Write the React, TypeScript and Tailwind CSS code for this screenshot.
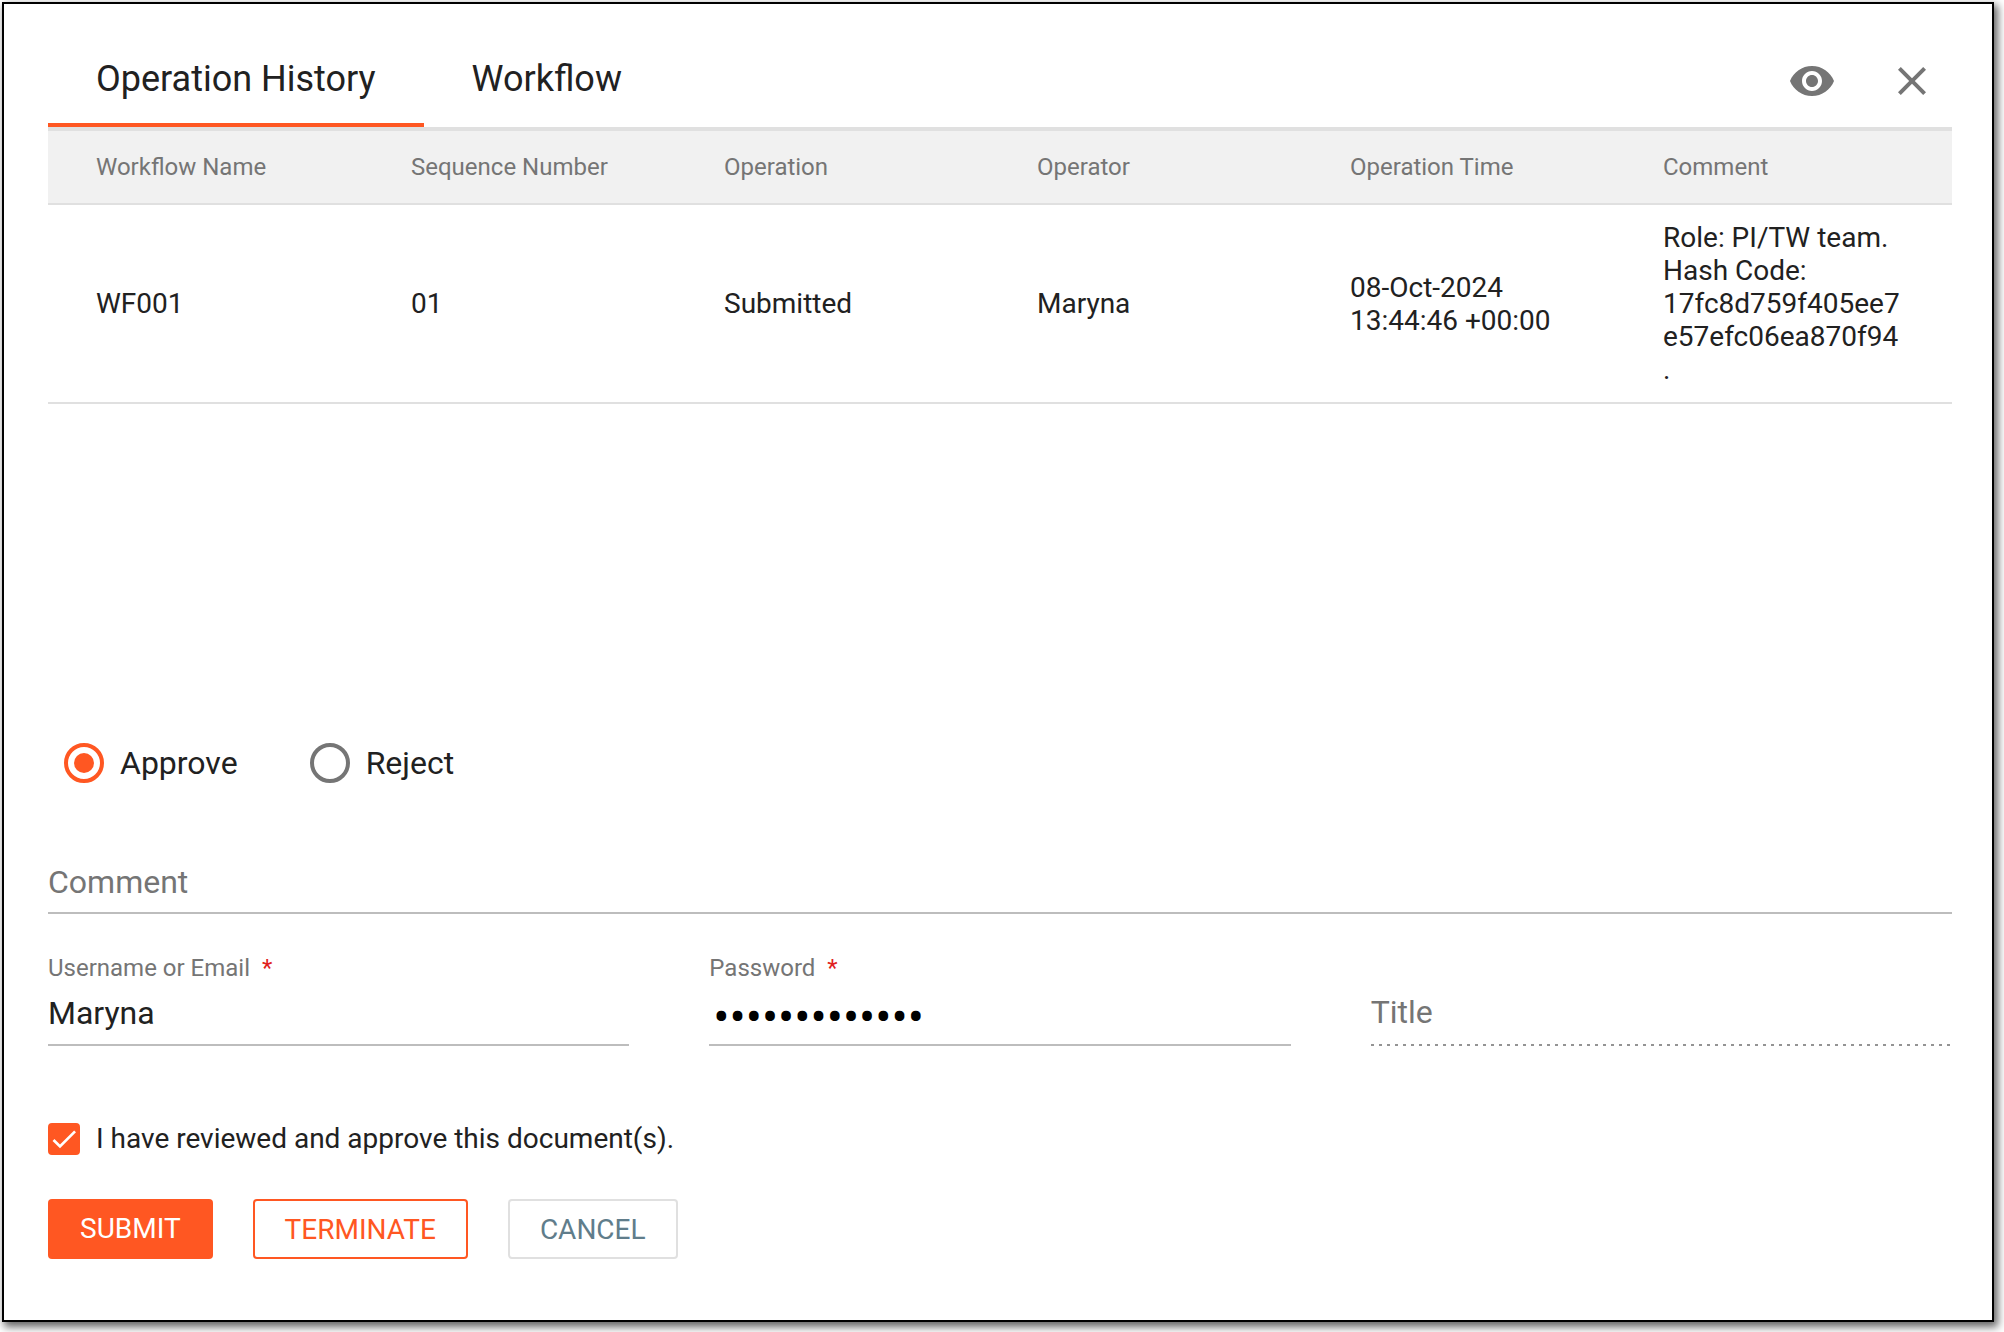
import React, { useState } from 'react';
import { MdCheck, MdClose, MdVisibility } from 'react-icons/md';

interface HistoryEntry {
  workflow: string;
  sequence: string;
  operation: string;
  operator: string;
  time: string;
  comment: string;
}

const columns = ['Workflow Name', 'Sequence Number', 'Operation', 'Operator', 'Operation Time', 'Comment'];

const history: HistoryEntry[] = [
  {
    workflow: 'WF001',
    sequence: '01',
    operation: 'Submitted',
    operator: 'Maryna',
    time: '08-Oct-2024 13:44:46 +00:00',
    comment: 'Role: PI/TW team. Hash Code: 17fc8d759f405ee7e57efc06ea870f94.',
  },
];

const tabs = ['Operation History', 'Workflow'];

const Required = () => <span className="ml-3 text-[#e02020]">*</span>;

const HistoryTable = () => (
  <table className="w-full table-fixed border-collapse text-left">
    <colgroup>
      <col className="w-[339px]" />
      <col />
      <col />
      <col />
      <col />
      <col />
    </colgroup>
    <thead>
      <tr className="h-[73px] bg-[#f1f1f1] border-b-2 border-[#e0e0e0] text-2xl text-[#757575]">
        {columns.map((name) => (
          <th key={name} className="px-6 first:pl-12 last:pr-12 font-normal">{name}</th>
        ))}
      </tr>
    </thead>
    <tbody>
      {history.map((entry) => (
        <tr key={entry.workflow} className="border-b-2 border-[#e0e0e0] text-[28px] leading-[33px]">
          {Object.values(entry).map((value, index) => (
            <td key={index} className="px-6 py-4 first:pl-12 last:pr-12 break-words">{value}</td>
          ))}
        </tr>
      ))}
    </tbody>
  </table>
);

export default function App() {
  const [tab, setTab] = useState(tabs[0]);
  const [decision, setDecision] = useState('Approve');
  const [reviewed, setReviewed] = useState(true);
  const [username, setUsername] = useState('Maryna');
  const [password, setPassword] = useState('correcthorse1');

  return (
    <div className="min-h-screen bg-white pt-0.5 pl-0.5 pr-2.5 pb-2.5 font-['Roboto',sans-serif] text-[#212121]">
      <div className="border-2 border-black bg-white pl-11 pr-10 pb-[61px] shadow-[3px_4px_8px_1px_rgba(0,0,0,0.6)]">
        <header className="flex items-stretch justify-between border-b-4 border-[#e0e0e0] pt-[31px]">
          <div role="tablist" className="flex">
            {tabs.map((name) => (
              <button
                key={name}
                type="button"
                role="tab"
                aria-selected={tab === name}
                onClick={() => setTab(name)}
                className={`h-[92px] px-12 border-b-4 text-4xl ${tab === name ? 'border-[#ff5722]' : 'border-transparent'}`}
              >
                {name}
              </button>
            ))}
          </div>
          <div className="flex items-center gap-[52px] pr-4 text-[#757575]">
            <button type="button" aria-label="Preview"><MdVisibility size={48} /></button>
            <button type="button" aria-label="Close"><MdClose size={48} /></button>
          </div>
        </header>

        <div className="min-h-[612px]">
          <HistoryTable />
        </div>

        <form onSubmit={(e) => e.preventDefault()}>
          <div className="flex gap-18 px-4 text-[32px] leading-10">
            {['Approve', 'Reject'].map((option) => (
              <label key={option} className="flex items-center gap-4">
                <input
                  type="radio"
                  name="decision"
                  checked={decision === option}
                  onChange={() => setDecision(option)}
                  className="size-10 appearance-none rounded-full border-4 border-[#757575] bg-clip-content p-1.5 checked:border-[#ff5722] checked:bg-[#ff5722]"
                />
                {option}
              </label>
            ))}
          </div>

          <input
            type="text"
            aria-label="Comment"
            placeholder="Comment"
            className="mt-[69px] block h-[62px] w-full border-b-2 border-[#bdbdbd] text-[32px] outline-none placeholder:text-[#757575]"
          />

          <div className="mt-10 grid grid-cols-3 gap-20">
            <div>
              <label htmlFor="username" className="block text-2xl leading-7 text-[#757575]">
                Username or Email<Required />
              </label>
              <input
                id="username"
                type="text"
                required
                value={username}
                onChange={(e) => setUsername(e.target.value)}
                className="block h-16 w-full border-b-2 border-[#bdbdbd] text-[32px] outline-none"
              />
            </div>
            <div>
              <label htmlFor="password" className="block text-2xl leading-7 text-[#757575]">
                Password<Required />
              </label>
              <input
                id="password"
                type="password"
                required
                value={password}
                onChange={(e) => setPassword(e.target.value)}
                className="block h-16 w-full border-b-2 border-[#bdbdbd] px-1 pt-2 text-5xl text-black outline-none"
              />
            </div>
            <div className="flex flex-col justify-end">
              <input
                type="text"
                aria-label="Title"
                placeholder="Title"
                disabled
                className="block h-16 w-full bg-[linear-gradient(to_right,#949494_3px,transparent_3px)] bg-[length:8px_2px] bg-bottom-left bg-repeat-x pb-1 text-[32px] placeholder:text-[#757575]"
              />
            </div>
          </div>

          <label className="mt-[77px] flex w-fit items-center gap-4 text-[28px] leading-8">
            <span className="grid size-8 place-items-center">
              <input
                type="checkbox"
                checked={reviewed}
                onChange={(e) => setReviewed(e.target.checked)}
                className="col-start-1 row-start-1 size-8 appearance-none rounded-sm border-4 border-[#757575] checked:border-[#ff5722] checked:bg-[#ff5722]"
              />
              {reviewed && <MdCheck size={32} className="pointer-events-none col-start-1 row-start-1 text-white" />}
            </span>
            I have reviewed and approve this document(s).
          </label>

          <div className="mt-11 flex gap-10 text-[28px]">
            <button type="submit" className="h-15 rounded-sm bg-[#ff5722] px-8 text-white">SUBMIT</button>
            <button type="button" className="h-15 rounded-sm border-2 border-[#ff5722] px-[30px] pt-0.5 text-[#ff5722]">TERMINATE</button>
            <button type="button" className="h-15 rounded-sm border-2 border-[#e0e0e0] px-[30px] pt-0.5 text-[#607d8b]">CANCEL</button>
          </div>
        </form>
      </div>
    </div>
  );
}
